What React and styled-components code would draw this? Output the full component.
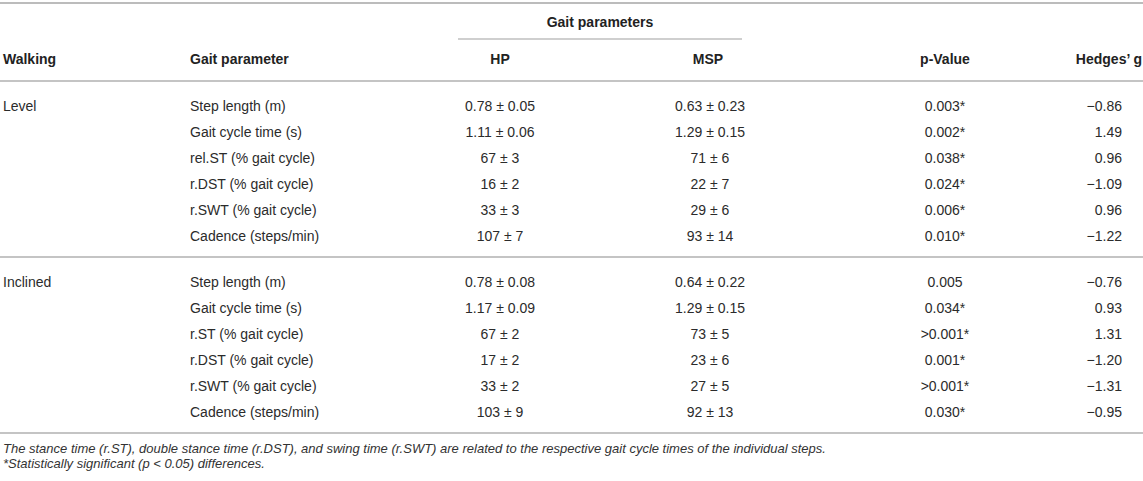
import styled, { createGlobalStyle } from "styled-components";

const GlobalStyle = createGlobalStyle`
  html, body {
    margin: 0;
    padding: 0;
    background: #ffffff;
  }
  body {
    font-family: "Liberation Sans", Arial, sans-serif;
    color: #2b2b2b;
  }
`;

const COLS = "187px 210px 206px 210px 230px 100px";

const Wrapper = styled.div`
  width: 1143px;
  padding-top: 2px;
`;

const Head = styled.div`
  display: grid;
  grid-template-columns: ${COLS};
  grid-template-rows: 36px 40px;
  border-top: 2px solid #bcbcbc;
  border-bottom: 2px solid #c4c4c4;
  font-size: 14px;
  font-weight: 700;
  color: #222;
`;

const Spanner = styled.div`
  grid-column: 3 / 5;
  grid-row: 1;
  margin: 0 71px 0 61px;
  border-bottom: 2px solid #cfcfcf;
  display: flex;
  align-items: center;
  justify-content: center;
  padding-top: 2px;
`;

const HeadCell = styled.div`
  grid-row: 2;
  display: flex;
  align-items: center;
  padding-bottom: 3px;
  justify-content: ${(p) => p.$align || "center"};
  padding-left: ${(p) => p.$pl || 0}px;
  padding-right: ${(p) => p.$pr || 0}px;
`;

const Group = styled.div`
  padding: 11px 0 7px;
  border-bottom: 2px solid #c4c4c4;
`;

const Row = styled.div`
  display: grid;
  grid-template-columns: ${COLS};
  height: 26px;
  align-items: center;
  font-size: 14px;
`;

const Cell = styled.div`
  white-space: nowrap;
  text-align: ${(p) => p.$align || "center"};
  padding-left: ${(p) => p.$pl || 0}px;
  padding-right: ${(p) => p.$pr || 0}px;
`;

const Notes = styled.div`
  padding: 8px 0 0 3px;
  font-size: 13px;
  font-style: italic;
  line-height: 14.5px;
  color: #333;
`;

const data = [
  {
    walking: "Level",
    rows: [
      ["Step length (m)", "0.78 \u00b1 0.05", "0.63 \u00b1 0.23", "0.003*", "\u22120.86"],
      ["Gait cycle time (s)", "1.11 \u00b1 0.06", "1.29 \u00b1 0.15", "0.002*", "1.49"],
      ["rel.ST (% gait cycle)", "67 \u00b1 3", "71 \u00b1 6", "0.038*", "0.96"],
      ["r.DST (% gait cycle)", "16 \u00b1 2", "22 \u00b1 7", "0.024*", "\u22121.09"],
      ["r.SWT (% gait cycle)", "33 \u00b1 3", "29 \u00b1 6", "0.006*", "0.96"],
      ["Cadence (steps/min)", "107 \u00b1 7", "93 \u00b1 14", "0.010*", "\u22121.22"],
    ],
  },
  {
    walking: "Inclined",
    rows: [
      ["Step length (m)", "0.78 \u00b1 0.08", "0.64 \u00b1 0.22", "0.005", "\u22120.76"],
      ["Gait cycle time (s)", "1.17 \u00b1 0.09", "1.29 \u00b1 0.15", "0.034*", "0.93"],
      ["r.ST (% gait cycle)", "67 \u00b1 2", "73 \u00b1 5", ">0.001*", "1.31"],
      ["r.DST (% gait cycle)", "17 \u00b1 2", "23 \u00b1 6", "0.001*", "\u22121.20"],
      ["r.SWT (% gait cycle)", "33 \u00b1 2", "27 \u00b1 5", ">0.001*", "\u22121.31"],
      ["Cadence (steps/min)", "103 \u00b1 9", "92 \u00b1 13", "0.030*", "\u22120.95"],
    ],
  },
];

export default function App() {
  return (
    <>
      <GlobalStyle />
      <Wrapper>
        <Head>
          <Spanner>Gait parameters</Spanner>
          <HeadCell $align="flex-start" $pl={3}>Walking</HeadCell>
          <HeadCell $align="flex-start" $pl={3}>Gait parameter</HeadCell>
          <HeadCell>HP</HeadCell>
          <HeadCell $pr={0} $pl={0}>MSP</HeadCell>
          <HeadCell $pl={34}>p-Value</HeadCell>
          <HeadCell $align="flex-end" $pr={1}>Hedges’ g</HeadCell>
        </Head>
        {data.map((g) => (
          <Group key={g.walking}>
            {g.rows.map((r, i) => (
              <Row key={r[0]}>
                <Cell $align="left" $pl={3}>{i === 0 ? g.walking : ""}</Cell>
                <Cell $align="left" $pl={3}>{r[0]}</Cell>
                <Cell>{r[1]}</Cell>
                <Cell $pl={4}>{r[2]}</Cell>
                <Cell $pl={34}>{r[3]}</Cell>
                <Cell $align="right" $pr={21}>{r[4]}</Cell>
              </Row>
            ))}
          </Group>
        ))}
        <Notes>
          <div>
            The stance time (r.ST), double stance time (r.DST), and swing time (r.SWT) are related to the respective gait cycle times of the individual steps.
          </div>
          <div>*Statistically significant (p &lt; 0.05) differences.</div>
        </Notes>
      </Wrapper>
    </>
  );
}
